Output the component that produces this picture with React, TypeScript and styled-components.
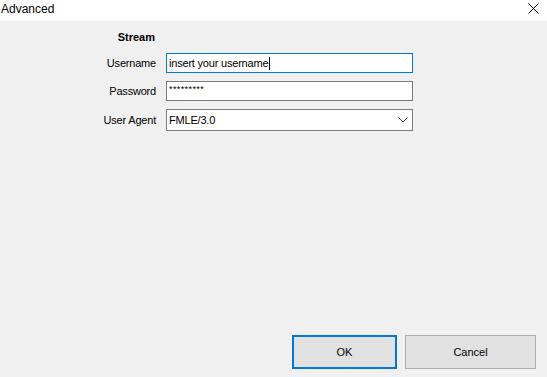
import * as React from "react";
import styled, { createGlobalStyle } from "styled-components";

const GlobalStyle = createGlobalStyle`
    html, body {
        margin: 0;
        padding: 0;
        background: #f0f0f0;
    }
    body {
        font-family: "Liberation Sans", Arial, sans-serif;
        font-size: 11px;
        color: #000;
    }
`;

type FieldRow = {
    label: string;
    value: string;
    kind: "focused" | "password" | "combo";
};

const rows: FieldRow[] = [
    { label: "Username", value: "insert your username", kind: "focused" },
    { label: "Password", value: "*********", kind: "password" },
    { label: "User Agent", value: "FMLE/3.0", kind: "combo" },
];

const App = () => (
    <Window>
        <GlobalStyle />
        <TitleBar>
            <Title>Advanced</Title>
            <CloseButton aria-label="Close">
                <svg width="11" height="11" viewBox="0 0 11 11">
                    <path d="M0.5 0.5 L10.5 10.5 M10.5 0.5 L0.5 10.5" stroke="#000" strokeWidth="1" fill="none" />
                </svg>
            </CloseButton>
        </TitleBar>
        <Body>
            <Form>
                <SectionLabel>Stream</SectionLabel>
                <span />
                {rows.map((row) => (
                    <React.Fragment key={row.label}>
                        <Label>{row.label}</Label>
                        <Field $focused={row.kind === "focused"} $tall={row.kind === "combo"}>
                            <FieldText $password={row.kind === "password"}>
                                {row.value}
                                {row.kind === "focused" && <Caret />}
                            </FieldText>
                            {row.kind === "combo" && (
                                <svg width="10" height="6" viewBox="0 0 10 6">
                                    <path d="M0.5 0.5 L5 5 L9.5 0.5" stroke="#444" strokeWidth="1" fill="none" />
                                </svg>
                            )}
                        </Field>
                    </React.Fragment>
                ))}
            </Form>
            <ButtonRow>
                <Button $primary $width={105}>OK</Button>
                <Button $width={131}>Cancel</Button>
            </ButtonRow>
        </Body>
    </Window>
);

export default App;

const Window = styled.div`
    width: 547px;
    height: 377px;
    display: flex;
    flex-direction: column;
    background: #f0f0f0;
    overflow: hidden;
`;

const TitleBar = styled.div`
    height: 21px;
    background: #fff;
    display: flex;
    align-items: center;
    justify-content: space-between;
    padding: 0 8px 0 1px;
`;

const Title = styled.div`
    font-size: 12px;
    margin-top: -4px;
`;

const CloseButton = styled.div`
    display: flex;
    margin-top: -5px;
`;

const Body = styled.div`
    flex: 1;
    display: flex;
    flex-direction: column;
    padding: 10px 11px 8px 0;
`;

const Form = styled.div`
    display: grid;
    grid-template-columns: 156px 247px;
    column-gap: 10px;
    row-gap: 8px;
    align-items: center;
`;

const SectionLabel = styled.div`
    font-weight: bold;
    text-align: right;
    margin-right: 1px;
    margin-bottom: 2px;
`;

const Label = styled.div`
    text-align: right;
    letter-spacing: -0.2px;
`;

const Field = styled.div<{ $focused?: boolean; $tall?: boolean }>`
    height: ${(p) => (p.$tall ? 22 : 20)}px;
    box-sizing: border-box;
    background: #fff;
    border: 1px solid ${(p) => (p.$focused ? "#0078d7" : "#7a7a7a")};
    display: flex;
    align-items: center;
    justify-content: space-between;
    padding: 0 4px 0 2px;
`;

const FieldText = styled.span<{ $password?: boolean }>`
    display: flex;
    align-items: center;
    letter-spacing: ${(p) => (p.$password ? "0.4px" : "-0.2px")};
    font-size: ${(p) => (p.$password ? "9px" : "11px")};
    margin-top: ${(p) => (p.$password ? "-5px" : "0")};
`;

const Caret = styled.span`
    display: inline-block;
    width: 1px;
    height: 13px;
    background: #000;
    margin-left: 1px;
`;

const ButtonRow = styled.div`
    margin-top: auto;
    display: flex;
    justify-content: flex-end;
    gap: 8px;
`;

const Button = styled.div<{ $primary?: boolean; $width: number }>`
    width: ${(p) => p.$width}px;
    height: 34px;
    box-sizing: border-box;
    background: #e1e1e1;
    border: ${(p) => (p.$primary ? "2px solid #0078d7" : "1px solid #adadad")};
    display: flex;
    align-items: center;
    justify-content: center;
    font-size: 11px;
`;
